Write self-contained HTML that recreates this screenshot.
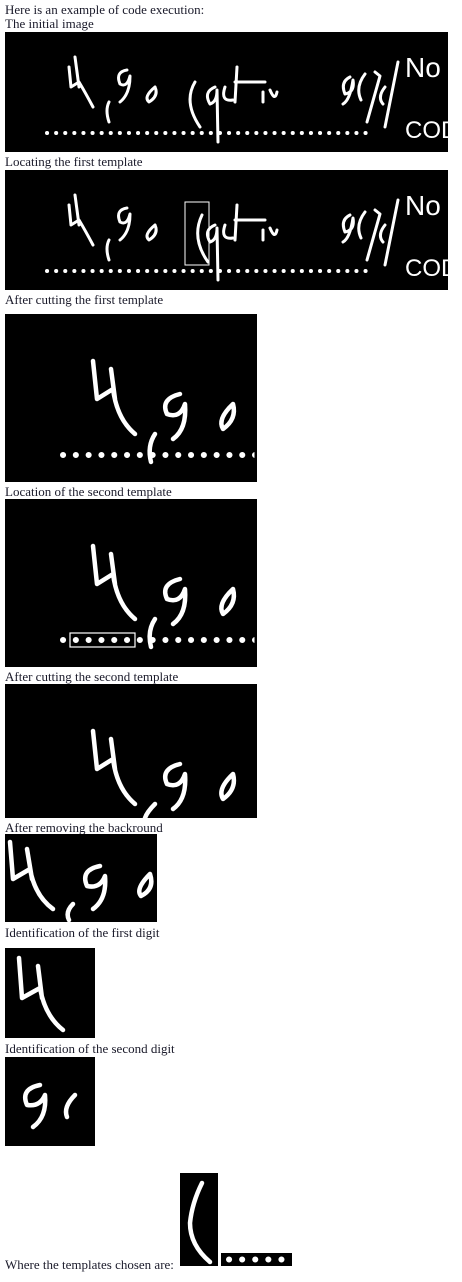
<!DOCTYPE html>
<html><head><meta charset="utf-8"><style>
html,body{margin:0;padding:0;background:#fff;width:462px;height:1282px;overflow:hidden}
body{position:relative;font-family:"Liberation Serif",serif;font-size:13px;color:#1a1a2a}
.t{position:absolute;left:5px;white-space:nowrap;line-height:14px}
.b{position:absolute;background:#000}
svg{position:absolute;left:0;top:0}
.s{fill:none;stroke:#fff;stroke-width:3;stroke-linecap:round;stroke-linejoin:round}
.s3{fill:none;stroke:#fff;stroke-width:4.5;stroke-linecap:round;stroke-linejoin:round}
</style></head><body>
<div class="t" style="top:3px">Here is an example of code execution:</div>
<div class="t" style="top:17px">The initial image</div>
<div class="b" style="left:5px;top:32px;width:443px;height:120px">
<svg width="443" height="120">
<path class="s" d="M64 35 L66 55 L74 50 M74 55 L70 25 M74 50 Q80 60 88 75"/>
<path class="s" d="M104 70 Q100 78 104 90"/>
<path class="s" d="M122 38 Q110 40 115 52 Q122 56 125 44 Q125 62 115 70 M150 55 Q138 65 144 70 Q154 64 150 55"/>
<path class="s" d="M190 50 Q178 70 195 95"/>
<path class="s" d="M210 55 Q198 60 205 72 Q212 70 212 58 L213 110 M220 55 Q215 70 228 68 M232 35 L230 70 M230 50 L260 50 M258 60 L258 70 M265 58 Q270 70 272 60"/>
<path class="s" d="M345 45 Q335 50 340 62 Q350 60 348 48 Q345 68 338 72 M360 42 Q350 55 356 68 M370 40 L375 44 L362 90 M380 55 Q372 65 378 72 M393 30 L380 95"/>
<text x="400" y="45" fill="#fff" font-family="Liberation Sans" font-size="28">No</text>
<text x="400" y="106" fill="#fff" font-family="Liberation Sans" font-size="24">COD</text>
<path d="M42 101 H365" stroke="#fff" stroke-width="4" stroke-dasharray="0.1 9" stroke-linecap="round"/>
</svg></div>
<div class="t" style="top:155px">Locating the first template</div>
<div class="b" style="left:5px;top:170px;width:443px;height:120px">
<svg width="443" height="120">
<path class="s" d="M64 35 L66 55 L74 50 M74 55 L70 25 M74 50 Q80 60 88 75"/>
<path class="s" d="M104 70 Q100 78 104 90"/>
<path class="s" d="M122 38 Q110 40 115 52 Q122 56 125 44 Q125 62 115 70 M150 55 Q138 65 144 70 Q154 64 150 55"/>
<path class="s" d="M197 45 Q186 68 203 92"/>
<rect x="180" y="32" width="24" height="63" fill="none" stroke="#fff" stroke-width="1"/>
<path class="s" d="M210 55 Q198 60 205 72 Q212 70 212 58 L213 110 M220 55 Q215 70 228 68 M232 35 L230 70 M230 50 L260 50 M258 60 L258 70 M265 58 Q270 70 272 60"/>
<path class="s" d="M345 45 Q335 50 340 62 Q350 60 348 48 Q345 68 338 72 M360 42 Q350 55 356 68 M370 40 L375 44 L362 90 M380 55 Q372 65 378 72 M393 30 L380 95"/>
<text x="400" y="45" fill="#fff" font-family="Liberation Sans" font-size="28">No</text>
<text x="400" y="106" fill="#fff" font-family="Liberation Sans" font-size="24">COD</text>
<path d="M42 101 H365" stroke="#fff" stroke-width="4" stroke-dasharray="0.1 9" stroke-linecap="round"/>
</svg></div>
<div class="t" style="top:293px">After cutting the first template</div>
<div class="b" style="left:5px;top:314px;width:252px;height:168px">
<svg width="252" height="168">
<path class="s3" d="M88 47 L92 85 L108 75 M110 85 L106 55 M108 75 Q112 105 130 120"/>
<path class="s3" d="M150 120 Q142 132 146 148"/>
<path class="s3" d="M175 80 Q155 85 162 100 Q175 105 180 90 Q182 115 168 125 M228 90 Q212 105 218 115 Q232 105 228 90"/>
<path d="M58 141 H250" stroke="#fff" stroke-width="6" stroke-dasharray="0.1 12.7" stroke-linecap="round"/>
</svg></div>
<div class="t" style="top:485px">Location of the second template</div>
<div class="b" style="left:5px;top:499px;width:252px;height:168px">
<svg width="252" height="168">
<path class="s3" d="M88 47 L92 85 L108 75 M110 85 L106 55 M108 75 Q112 105 130 120"/>
<path class="s3" d="M150 120 Q142 132 146 148"/>
<path class="s3" d="M175 80 Q155 85 162 100 Q175 105 180 90 Q182 115 168 125 M228 90 Q212 105 218 115 Q232 105 228 90"/>
<path d="M58 141 H250" stroke="#fff" stroke-width="6" stroke-dasharray="0.1 12.7" stroke-linecap="round"/>
<rect x="65" y="134" width="65" height="14" fill="none" stroke="#fff" stroke-width="1.2"/>
</svg></div>
<div class="t" style="top:670px">After cutting the second template</div>
<div class="b" style="left:5px;top:684px;width:252px;height:134px">
<svg width="252" height="134">
<path class="s3" d="M88 47 L92 85 L108 75 M110 85 L106 55 M108 75 Q112 105 130 120"/>
<path class="s3" d="M150 120 Q142 128 140 134"/>
<path class="s3" d="M175 80 Q155 85 162 100 Q175 105 180 90 Q182 115 168 125 M228 90 Q212 105 218 115 Q232 105 228 90"/>
</svg></div>
<div class="t" style="top:821px">After removing the backround</div>
<div class="b" style="left:5px;top:834px;width:152px;height:88px">
<svg width="152" height="88">
<path class="s3" d="M5 8 L8 45 L25 35 M27 45 L22 15 M25 35 Q30 62 48 75"/>
<path class="s3" d="M68 70 Q60 78 64 86"/>
<path class="s3" d="M95 32 Q75 36 82 52 Q95 55 100 42 Q102 65 88 75 M145 40 Q130 55 136 62 Q150 55 145 40"/>
</svg></div>
<div class="t" style="top:926px">Identification of the first digit</div>
<div class="b" style="left:5px;top:948px;width:90px;height:90px">
<svg width="90" height="90">
<path class="s3" d="M14 10 L17 50 L35 40 M37 50 L33 18 M35 40 Q40 68 58 82"/>
</svg></div>
<div class="t" style="top:1042px">Identification of the second digit</div>
<div class="b" style="left:5px;top:1057px;width:90px;height:89px">
<svg width="90" height="89">
<path class="s3" d="M35 28 Q15 32 22 48 Q35 50 40 38 Q42 60 28 70 M70 38 Q58 50 62 60"/>
</svg></div>
<div class="t" style="top:1258px">Where the templates chosen are:</div>
<div class="b" style="left:180px;top:1173px;width:38px;height:93px">
<svg width="38" height="93">
<path class="s3" d="M22 10 Q12 30 10 50 Q10 72 30 89"/>
</svg></div>
<div class="b" style="left:221px;top:1253px;width:71px;height:13px">
<svg width="71" height="13">
<path d="M8 6.5 H64" stroke="#fff" stroke-width="6" stroke-dasharray="0.1 13" stroke-linecap="round"/>
</svg></div>
</body></html>
